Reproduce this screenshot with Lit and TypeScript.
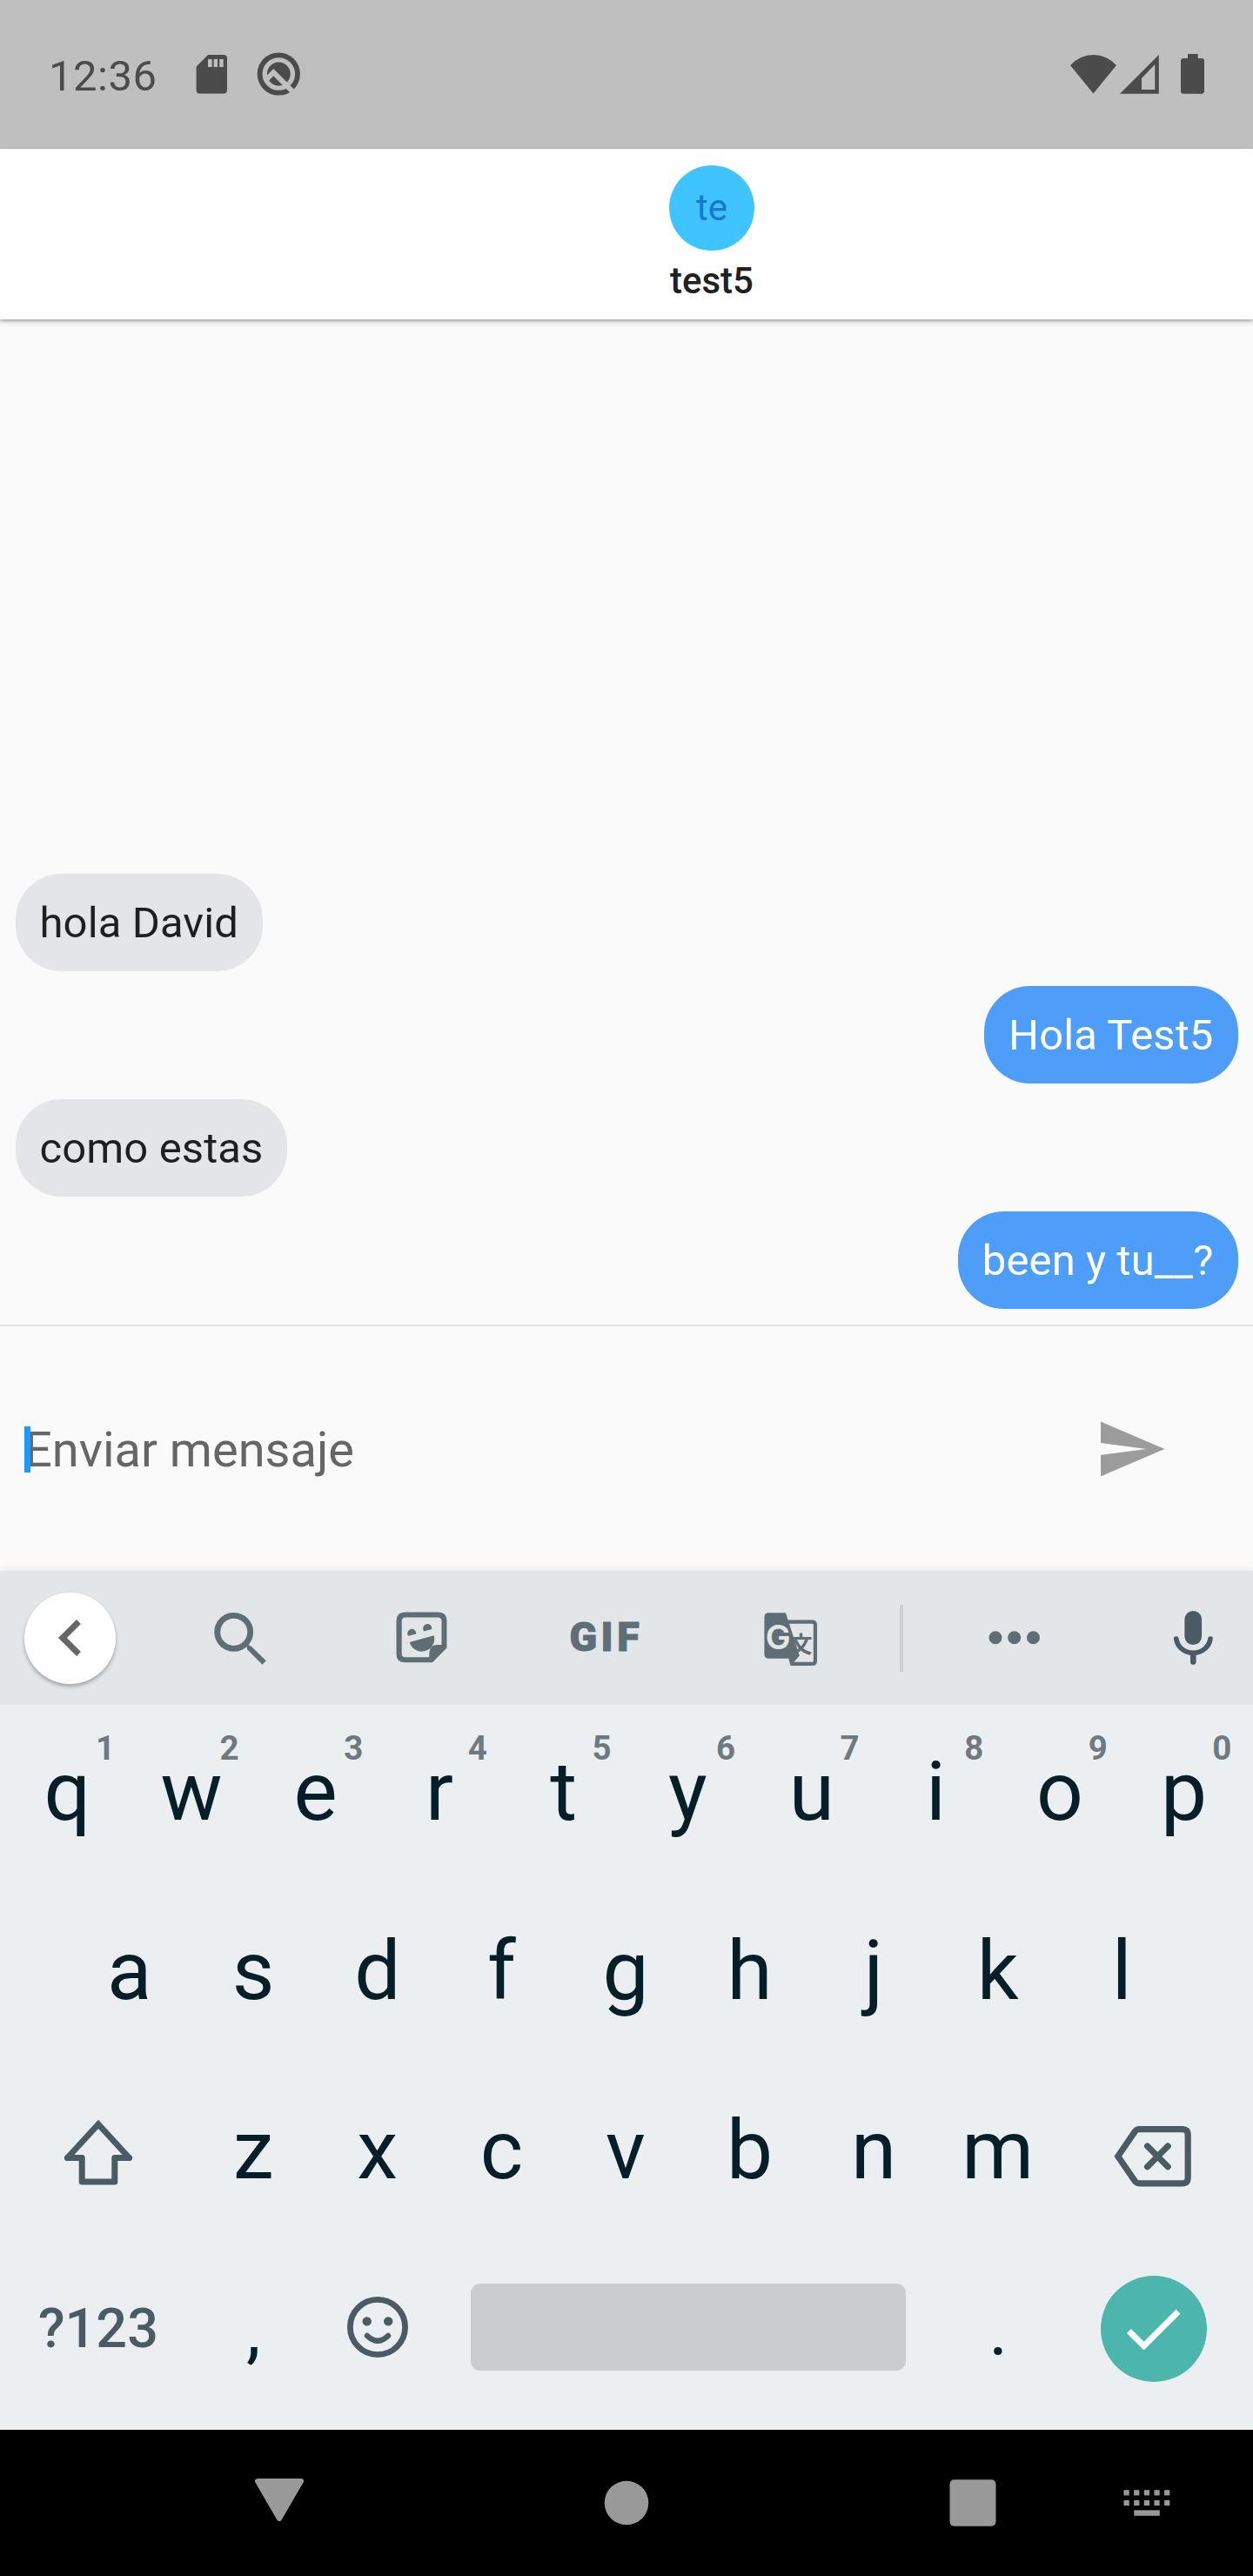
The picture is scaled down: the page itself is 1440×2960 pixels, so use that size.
import { LitElement, html, css, svg } from "lit";
import type { SVGTemplateResult } from "lit";
import { customElement, property } from "lit/decorators.js";
import { classMap } from "lit/directives/class-map.js";

/* Every icon is drawn on one shared screen-sized grid; the viewBox picks out its part of it. */
const icon = (x: number, y: number, w: number, h: number, body: SVGTemplateResult) => html`
  <svg width=${w} height=${h} viewBox="${x} ${y} ${w} ${h}" fill="currentColor" aria-hidden="true">${body}</svg>
`;

const sdCard = icon(225, 62, 37, 46, svg`
  <path fill-rule="evenodd" d="M239 63H257Q261 63 261 67V103.500Q261 107.500 257 107.500H229.500Q225.600 107.500 225.600 103.500V76.500ZM239 68V77H243.600V68ZM245.600 68V77H250V68ZM252.300 68V77H256.700V68Z"/>`);
const debugLens = icon(295, 60, 50, 50, svg`
  <circle cx="320.300" cy="85" r="21.700" fill="none" stroke="currentColor" stroke-width="5.800"/>
  <circle cx="320.300" cy="85" r="13.400"/>
  <path d="M304.500 93L314.300 83.200L342 110.900" fill="none" stroke="#bfbfbf" stroke-width="6"/>`);
const wifi = icon(1229, 62, 55, 46, svg`<path d="M1230 75A35.300 35.300 0 0 1 1283 75L1256.500 107.500Z"/>`);
const signal = icon(1286, 62, 47, 46, svg`
  <path fill-rule="evenodd" d="M1287 107.800L1331.800 63V107.800ZM1312 90V103H1327.300V74Z"/>`);
const battery = icon(1356, 61, 29, 47, svg`
  <rect x="1357" y="67" width="27" height="40.700" rx="3"/><rect x="1365" y="62" width="11.700" height="6"/>`);
const send = icon(1258, 1623, 84, 84, svg`
  <path transform="translate(1258 1623) scale(3.5)" d="M2.01 21L23 12 2.01 3 2 10l15 2-15 2z"/>`);
const chevron = icon(39, 1839.5, 84, 84, svg`
  <path transform="translate(39 1839.5) scale(3.5)" d="M15.41 7.41L14 6l-6 6 6 6 1.41-1.41L10.83 12z"/>`);
const search = icon(245, 1852, 62, 62, svg`
  <circle cx="268.700" cy="1875.300" r="19" fill="none" stroke="currentColor" stroke-width="6.800"/>
  <path d="M283.800 1891.500H288.500L305.700 1908.300L301.500 1912.700L284 1895.200ZM280 1889L283 1886L287 1891L284 1893Z"/>`);
const sticker = icon(456, 1852, 60, 60, svg`
  <path fill-rule="evenodd" d="M466.500 1852.500H504.500Q514.500 1852.500 514.500 1862.500V1893.500L498 1910.200H466.500Q456.500 1910.200 456.500 1900.200V1862.500Q456.500 1852.500 466.500 1852.500ZM467 1858.500Q462.700 1858.500 462.700 1863V1900Q462.700 1904.300 467 1904.300H494.300V1899.500Q494.300 1890 503.800 1890H508.500V1863Q508.500 1858.500 504 1858.500Z"/>
  <path d="M471.700 1887L499.700 1879.200A14.500 14.500 0 0 1 471.700 1887ZM470.300 1879.800A5 5 0 1 1 479.200 1877.400ZM488.200 1874.500A5.200 5.200 0 1 1 497.400 1872Z"/>`);
const translate = icon(878, 1852, 64, 64, svg`
  <path d="M884.400 1853.300H904L919.500 1901.500L920 1902.500L909.500 1914L907.300 1905.700H884.400Q879.400 1905.700 879.400 1900.700V1858.300Q879.400 1853.300 884.400 1853.300Z"/>
  <path d="M906 1863.600H934.500Q937.900 1863.600 937.900 1867V1908.500Q937.900 1911.900 934.500 1911.900H910" fill="none" stroke="currentColor" stroke-width="4.200"/>
  <path d="M912.500 1880L917.500 1889.500L922.500 1880Z" class="paper"/>
  <text x="895.200" y="1895" class="latin">G</text>
  <text x="921.500" y="1899" class="han">文</text>`);
const dots = icon(1135, 1872, 62, 20, svg`
  <circle cx="1144" cy="1881.700" r="7.500"/><circle cx="1165.700" cy="1881.700" r="7.500"/><circle cx="1187.500" cy="1881.700" r="7.500"/>`);
const mic = icon(1348, 1849, 47, 64, svg`
  <rect x="1361.400" y="1850" width="19.700" height="39" rx="9.800"/>
  <path d="M1351.700 1882C1353 1891.500 1361 1898.300 1371.300 1898.300S1389.600 1891.500 1391 1882" fill="none" stroke="currentColor" stroke-width="5.600" stroke-linecap="round"/>
  <path d="M1371.300 1899V1908.600" fill="none" stroke="currentColor" stroke-width="6.600" stroke-linecap="round"/>`);
const shift = icon(72, 2434, 82, 79, svg`
  <g fill="none" stroke="currentColor" stroke-width="7" stroke-linecap="round">
    <path d="M77.500 2479.500L113 2440.900L148.500 2479.500"/>
    <path stroke-linejoin="round" d="M77.500 2479.500H94.200V2507H131.800V2479.500H148.500"/>
  </g>`);
const backspace = icon(1278, 2442, 91, 72, svg`
  <g fill="none" stroke="currentColor" stroke-width="7.200">
    <path d="M1283.800 2477.700L1303.500 2449Q1305.500 2446.600 1308 2446.600H1358Q1364.200 2446.600 1364.200 2453V2502.500Q1364.200 2508.800 1358 2508.800H1308Q1305.500 2508.800 1303.500 2506.500Z"/>
    <path stroke-linecap="round" d="M1317.600 2466L1341.200 2489.800M1341.200 2466L1317.600 2489.800"/>
  </g>`);
const smiley = icon(397, 2638, 72, 72, svg`
  <circle cx="433" cy="2674" r="31.600" fill="none" stroke="currentColor" stroke-width="6.800"/>
  <circle cx="420.700" cy="2667.400" r="5.200"/><circle cx="445.200" cy="2667.400" r="5.200"/>
  <path d="M421 2684Q433 2695.500 445 2684" fill="none" stroke="currentColor" stroke-width="6.400" stroke-linecap="round"/>`);
const check = icon(1290, 2650, 72, 54, svg`
  <path d="M1297.400 2679.500L1314.600 2696.600L1354 2657.200" fill="none" stroke="currentColor" stroke-width="7"/>`);
const navBack = icon(292, 2847, 58, 51, svg`
  <path stroke="currentColor" stroke-width="6" stroke-linejoin="round" d="M296 2851H346L321 2894Z"/>`);
const navHome = icon(694, 2850, 52, 52, svg`<circle cx="720" cy="2876" r="25.300"/>`);
const navRecent = icon(1091, 2849, 54, 54, svg`<rect x="1091.500" y="2849.300" width="53" height="53.400" rx="5"/>`);
const navKeyboard = icon(1291, 2860, 54, 32, svg`
  ${[2861.2, 2872.9].map(y => [0, 1, 2, 3, 4].map(i => svg`<rect x=${1291.5 + i * 11.65} y=${y} width="6.200" height="6.200"/>`))}
  <rect x="1303.300" y="2884.400" width="29.500" height="6.400"/>`);

@customElement("status-bar")
export class StatusBar extends LitElement {
  static styles = css`
    :host { display: flex; align-items: flex-start; height: 171px; background: #bfbfbf; color: #4b4b4b; box-sizing: border-box; padding-left: 56px; }
    .time { font-size: 49px; line-height: 57px; letter-spacing: 0.5px; padding-top: 59px; width: 169px; }
    .slot { display: flex; }
    svg { display: block; }
    .sd { padding-top: 62px; width: 70px; }
    .lens { padding-top: 60px; flex: 1; }
    .wifi { padding-top: 62px; width: 57px; }
    .signal { padding-top: 62px; width: 70px; }
    .battery { padding-top: 61px; width: 84px; }
  `;
  render() {
    return html`
      <span class="time">12:36</span>
      <span class="slot sd">${sdCard}</span>
      <span class="slot lens">${debugLens}</span>
      <span class="slot wifi">${wifi}</span>
      <span class="slot signal">${signal}</span>
      <span class="slot battery">${battery}</span>
    `;
  }
}

@customElement("chat-header")
export class ChatHeader extends LitElement {
  @property() name = "";
  static styles = css`
    :host { display: flex; flex-direction: column; align-items: center; height: 196px; box-sizing: border-box; padding: 19px 0 0 196px; background: #fff; box-shadow: 0 2px 3px rgba(0, 0, 0, 0.22), 0 3px 7px rgba(0, 0, 0, 0.14); position: relative; }
    .avatar { width: 98px; height: 98px; border-radius: 50%; background: #40c4ff; color: #1976d2; font-size: 42px; line-height: 98px; text-align: center; }
    .name { font-size: 42px; font-weight: 500; line-height: 50px; margin-top: 10px; color: #212121; }
  `;
  render() {
    return html`<div class="avatar">${this.name.slice(0, 2)}</div><div class="name">${this.name}</div>`;
  }
}

@customElement("chat-bubble")
export class ChatBubble extends LitElement {
  @property() text = "";
  @property({ type: Boolean }) mine = false;
  static styles = css`
    :host { display: flex; }
    .bubble { height: 112px; box-sizing: border-box; padding: 1px 28px 0; border-radius: 52.5px; background: #e4e5e9; color: #1e201f; font-size: 49px; line-height: 112px; letter-spacing: 0.1px; white-space: nowrap; }
    .mine { margin-left: auto; background: #4e9df8; color: #fff; }
  `;
  render() {
    return html`<div class=${classMap({ bubble: true, mine: this.mine })}>${this.text}</div>`;
  }
}

@customElement("message-input")
export class MessageInput extends LitElement {
  static styles = css`
    :host { display: flex; align-items: flex-start; justify-content: space-between; height: 281px; box-sizing: border-box; padding: 0 98px 0 28px; }
    .field { position: relative; padding-top: 109px; font-size: 56px; line-height: 66px; color: #666; }
    .caret { position: absolute; left: 0; top: 115px; width: 7px; height: 52.5px; background: #2196f3; }
    .send { padding-top: 99px; color: #9c9c9c; }
    svg { display: block; }
  `;
  render() {
    return html`
      <div class="field">Enviar mensaje<span class="caret"></span></div>
      <div class="send">${send}</div>
    `;
  }
}

@customElement("key-toolbar")
export class KeyToolbar extends LitElement {
  static styles = css`
    :host { display: flex; align-items: center; height: 154px; box-sizing: border-box; padding-left: 28px; background: #e2e6e9; color: #5f6e75; box-shadow: 0 0 11px rgba(0, 0, 0, 0.09); }
    svg { display: block; }
    .back { flex: none; display: grid; place-items: center; width: 105px; height: 105px; margin-right: 38px; border-radius: 50%; background: #fff; color: #666; box-shadow: 0 3px 4px rgba(0, 0, 0, 0.28); }
    .cell { flex: none; display: grid; place-items: center; width: 209.500px; }
    .search { padding-top: 2px; }
    .gif { font-size: 46.500px; line-height: 54px; font-weight: 900; letter-spacing: 4.500px; padding-left: 4px; padding-bottom: 2px; box-sizing: border-box; -webkit-text-stroke: 1px currentColor; }
    .translate { width: 219px; padding-top: 4px; }
    .rule { flex: none; width: 4px; height: 77px; background: #cbcfd2; margin-left: 15.500px; }
    .more { width: 255.400px; }
    .mic { color: #4a5b63; width: 146.600px; justify-items: start; padding-left: 54.600px; box-sizing: border-box; }
    .latin { font: 600 38.500px Inter, sans-serif; fill: #e2e6e9; text-anchor: middle; }
    .han { font: 700 26px "Noto Sans CJK JP", sans-serif; text-anchor: middle; }
    .paper { fill: #e2e6e9; }
  `;
  render() {
    return html`
      <span class="back">${chevron}</span>
      <span class="cell search">${search}</span>
      <span class="cell">${sticker}</span>
      <span class="cell gif">GIF</span>
      <span class="cell translate">${translate}</span>
      <span class="rule"></span>
      <span class="cell more">${dots}</span>
      <span class="cell mic">${mic}</span>
    `;
  }
}

@customElement("soft-keyboard")
export class SoftKeyboard extends LitElement {
  static styles = css`
    :host { display: block; height: 833px; background: #ebeff2; color: #051e27; }
    .row { display: flex; height: 206px; padding: 0 8px 0 6px; }
    .home { padding: 0 79.300px 0 77.300px; }
    .key { flex: 0 0 142.600px; position: relative; text-align: center; font-size: 94.500px; line-height: 200px; }
    .hint { position: absolute; left: 104px; top: 27px; font-size: 38.500px; line-height: 46px; font-weight: 700; color: #6e7a80; }
    .wide { flex: 0 0 213.900px; display: flex; justify-content: center; color: #4a5b63; }
    svg { display: block; }
    .shift { padding-top: 63px; }
    .delete { padding-top: 71px; }
    .symbols { font-size: 63px; font-weight: 500; line-height: 198px; }
    .mark { font-size: 84px; line-height: 202px; }
    .emoji { display: flex; justify-content: center; padding-top: 61px; color: #4a5b63; }
    .space { width: 500px; height: 100px; margin: 47px 35.500px 0; border-radius: 11px; background: #c9cdd0; }
    .enter { display: grid; place-items: center; width: 122px; height: 122px; margin: 38px 0 0 46.600px; border-radius: 50%; background: #4db6ac; color: #fff; }
  `;
  render() {
    const key = (c: string) => html`<span class="key">${c}</span>`;
    return html`
      <div class="row">
        ${[..."qwertyuiop"].map((c, i) => html`<span class="key">${c}<span class="hint">${(i + 1) % 10}</span></span>`)}
      </div>
      <div class="row home">${[..."asdfghjkl"].map(key)}</div>
      <div class="row">
        <span class="wide shift">${shift}</span>
        ${[..."zxcvbnm"].map(key)}
        <span class="wide delete">${backspace}</span>
      </div>
      <div class="row">
        <span class="wide symbols">?123</span>
        <span class="key mark">,</span>
        <span class="key emoji">${smiley}</span>
        <span class="space"></span>
        <span class="key mark">.</span>
        <span class="enter">${check}</span>
      </div>
    `;
  }
}

@customElement("nav-bar")
export class NavBar extends LitElement {
  static styles = css`
    :host { display: flex; align-items: center; height: 168px; box-sizing: border-box; padding-left: 292px; background: #000; color: #999; }
    svg { display: block; }
    .back { width: 402px; padding-bottom: 7px; }
    .home { width: 397px; }
    .recent { width: 200px; }
  `;
  render() {
    return html`
      <span class="back">${navBack}</span>
      <span class="home">${navHome}</span>
      <span class="recent">${navRecent}</span>
      <span>${navKeyboard}</span>
    `;
  }
}

@customElement("app-root")
export class AppRoot extends LitElement {
  static styles = css`
    :host { display: flex; flex-direction: column; width: 1440px; height: 2960px; overflow: hidden; background: #fafafa; font-family: Roboto, "Liberation Sans", sans-serif; }
    .messages { flex: 1; display: flex; flex-direction: column; justify-content: flex-end; gap: 17.500px; padding: 0 17.500px 18px; border-bottom: 2px solid #e2e2e2; }
  `;
  private messages = [
    { text: "hola David", mine: false },
    { text: "Hola Test5", mine: true },
    { text: "como estas", mine: false },
    { text: "been y tu__?", mine: true },
  ];
  render() {
    return html`
      <status-bar></status-bar>
      <chat-header name="test5"></chat-header>
      <div class="messages">
        ${this.messages.map(m => html`<chat-bubble .text=${m.text} ?mine=${m.mine}></chat-bubble>`)}
      </div>
      <message-input></message-input>
      <key-toolbar></key-toolbar>
      <soft-keyboard></soft-keyboard>
      <nav-bar></nav-bar>
    `;
  }
}
